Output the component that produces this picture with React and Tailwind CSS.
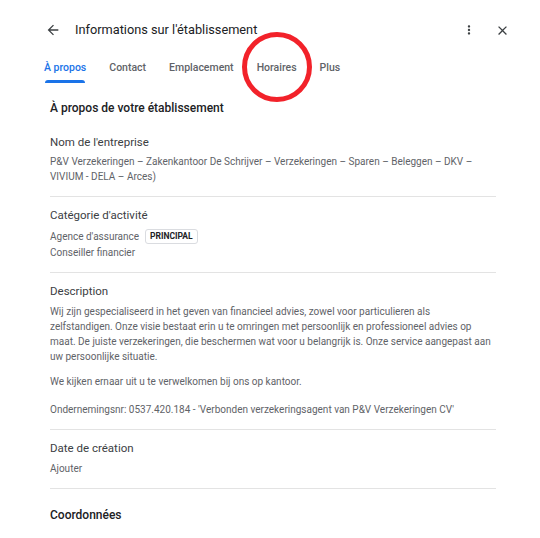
import React from 'react';

const tabs = ['À propos', 'Contact', 'Emplacement', 'Horaires', 'Plus'];

const Section = ({ title, children }) => (
  <div className="pt-[10px] pb-[12px] border-b border-[#e3e3e3]">
    <div className="text-[11.5px] leading-[16px] text-[#3c4043]">{title}</div>
    <div className="mt-[5px] text-[10px] leading-[15px] text-[#5f6368]">{children}</div>
  </div>
);

const App = () => {
  return (
    <div className="relative w-[540px] h-[538px] bg-white overflow-hidden" style={{ fontFamily: 'Roboto, "Liberation Sans", sans-serif' }}>
      {/* Header */}
      <div className="h-[52px] pt-[8px] flex items-center pl-[45px] pr-[30px]">
        <svg width="16" height="16" viewBox="0 0 24 24" className="text-[#3c4043]">
          <path d="M20 11H7.83l5.59-5.59L12 4l-8 8 8 8 1.41-1.41L7.83 13H20v-2z" fill="currentColor" />
        </svg>
        <div className="ml-[14px] text-[12.75px] text-[#202124]">Informations sur l'établissement</div>
        <div className="ml-auto flex items-center gap-[19px]">
          <svg width="14" height="14" viewBox="0 0 24 24" className="text-[#3c4043]">
            <path d="M12 8c1.1 0 2-.9 2-2s-.9-2-2-2-2 .9-2 2 .9 2 2 2zm0 2c-1.1 0-2 .9-2 2s.9 2 2 2 2-.9 2-2-.9-2-2-2zm0 6c-1.1 0-2 .9-2 2s.9 2 2 2 2-.9 2-2-.9-2-2-2z" fill="currentColor" />
          </svg>
          <svg width="15" height="15" viewBox="0 0 24 24" className="text-[#3c4043]">
            <path d="M19 6.41 17.59 5 12 10.59 6.41 5 5 6.41 10.59 12 5 17.59 6.41 19 12 13.41 17.59 19 19 17.59 13.41 12z" fill="currentColor" />
          </svg>
        </div>
      </div>

      {/* Tabs */}
      <div className="flex h-[31px] pl-[44px] gap-[23px]">
        {tabs.map((t, i) => (
          <div key={t} className={`relative flex items-center text-[10.5px] font-medium ${i === 0 ? 'text-[#1a73e8]' : 'text-[#5f6368]'}`}>
            {t}
            {i === 0 && <span className="absolute left-[1px] right-[1px] bottom-0 h-[3px] rounded-t-[3px] bg-[#1a73e8]" />}
          </div>
        ))}
      </div>

      {/* Content */}
      <div className="w-[446px] ml-[50px] mt-[17px]">
        <div className="text-[12px] leading-[16px] text-[#202124] font-medium">À propos de votre établissement</div>

        <div className="pt-[18px] pb-[12px] border-b border-[#e3e3e3]">
          <div className="text-[11.5px] leading-[16px] text-[#3c4043]">Nom de l'entreprise</div>
          <div className="mt-[4px] text-[10px] leading-[15px] text-[#5f6368]">
            P&amp;V Verzekeringen – Zakenkantoor De Schrijver – Verzekeringen – Sparen – Beleggen – DKV –<br />
            VIVIUM - DELA – Arces)
          </div>
        </div>

        <Section title="Catégorie d'activité">
          <div className="flex items-center gap-[6px] h-[17px]">
            <span>Agence d'assurance</span>
            <span className="px-[4px] h-[15px] flex items-center border border-[#dadce0] rounded-[3px] text-[8.5px] font-bold text-[#202124]">PRINCIPAL</span>
          </div>
          <div>Conseiller financier</div>
        </Section>

        <Section title="Description">
          <p>
            Wij zijn gespecialiseerd in het geven van financieel advies, zowel voor particulieren als<br />
            zelfstandigen. Onze visie bestaat erin u te omringen met persoonlijk en professioneel advies op<br />
            maat. De juiste verzekeringen, die beschermen wat voor u belangrijk is. Onze service aangepast aan<br />
            uw persoonlijke situatie.
          </p>
          <p className="mt-[10px]">We kijken ernaar uit u te verwelkomen bij ons op kantoor.</p>
          <p className="mt-[13px]">Ondernemingsnr: 0537.420.184 - 'Verbonden verzekeringsagent van P&amp;V Verzekeringen CV'</p>
        </Section>

        <Section title="Date de création">Ajouter</Section>

        <div className="pt-[18px] text-[12px] leading-[16px] text-[#202124] font-medium">Coordonnées</div>
      </div>

      {/* Red annotation circle */}
      <div className="absolute left-[242px] top-[32px] w-[70px] h-[70px] rounded-full border-[5px] border-[#f2222a]" />
    </div>
  );
};

export default App;
